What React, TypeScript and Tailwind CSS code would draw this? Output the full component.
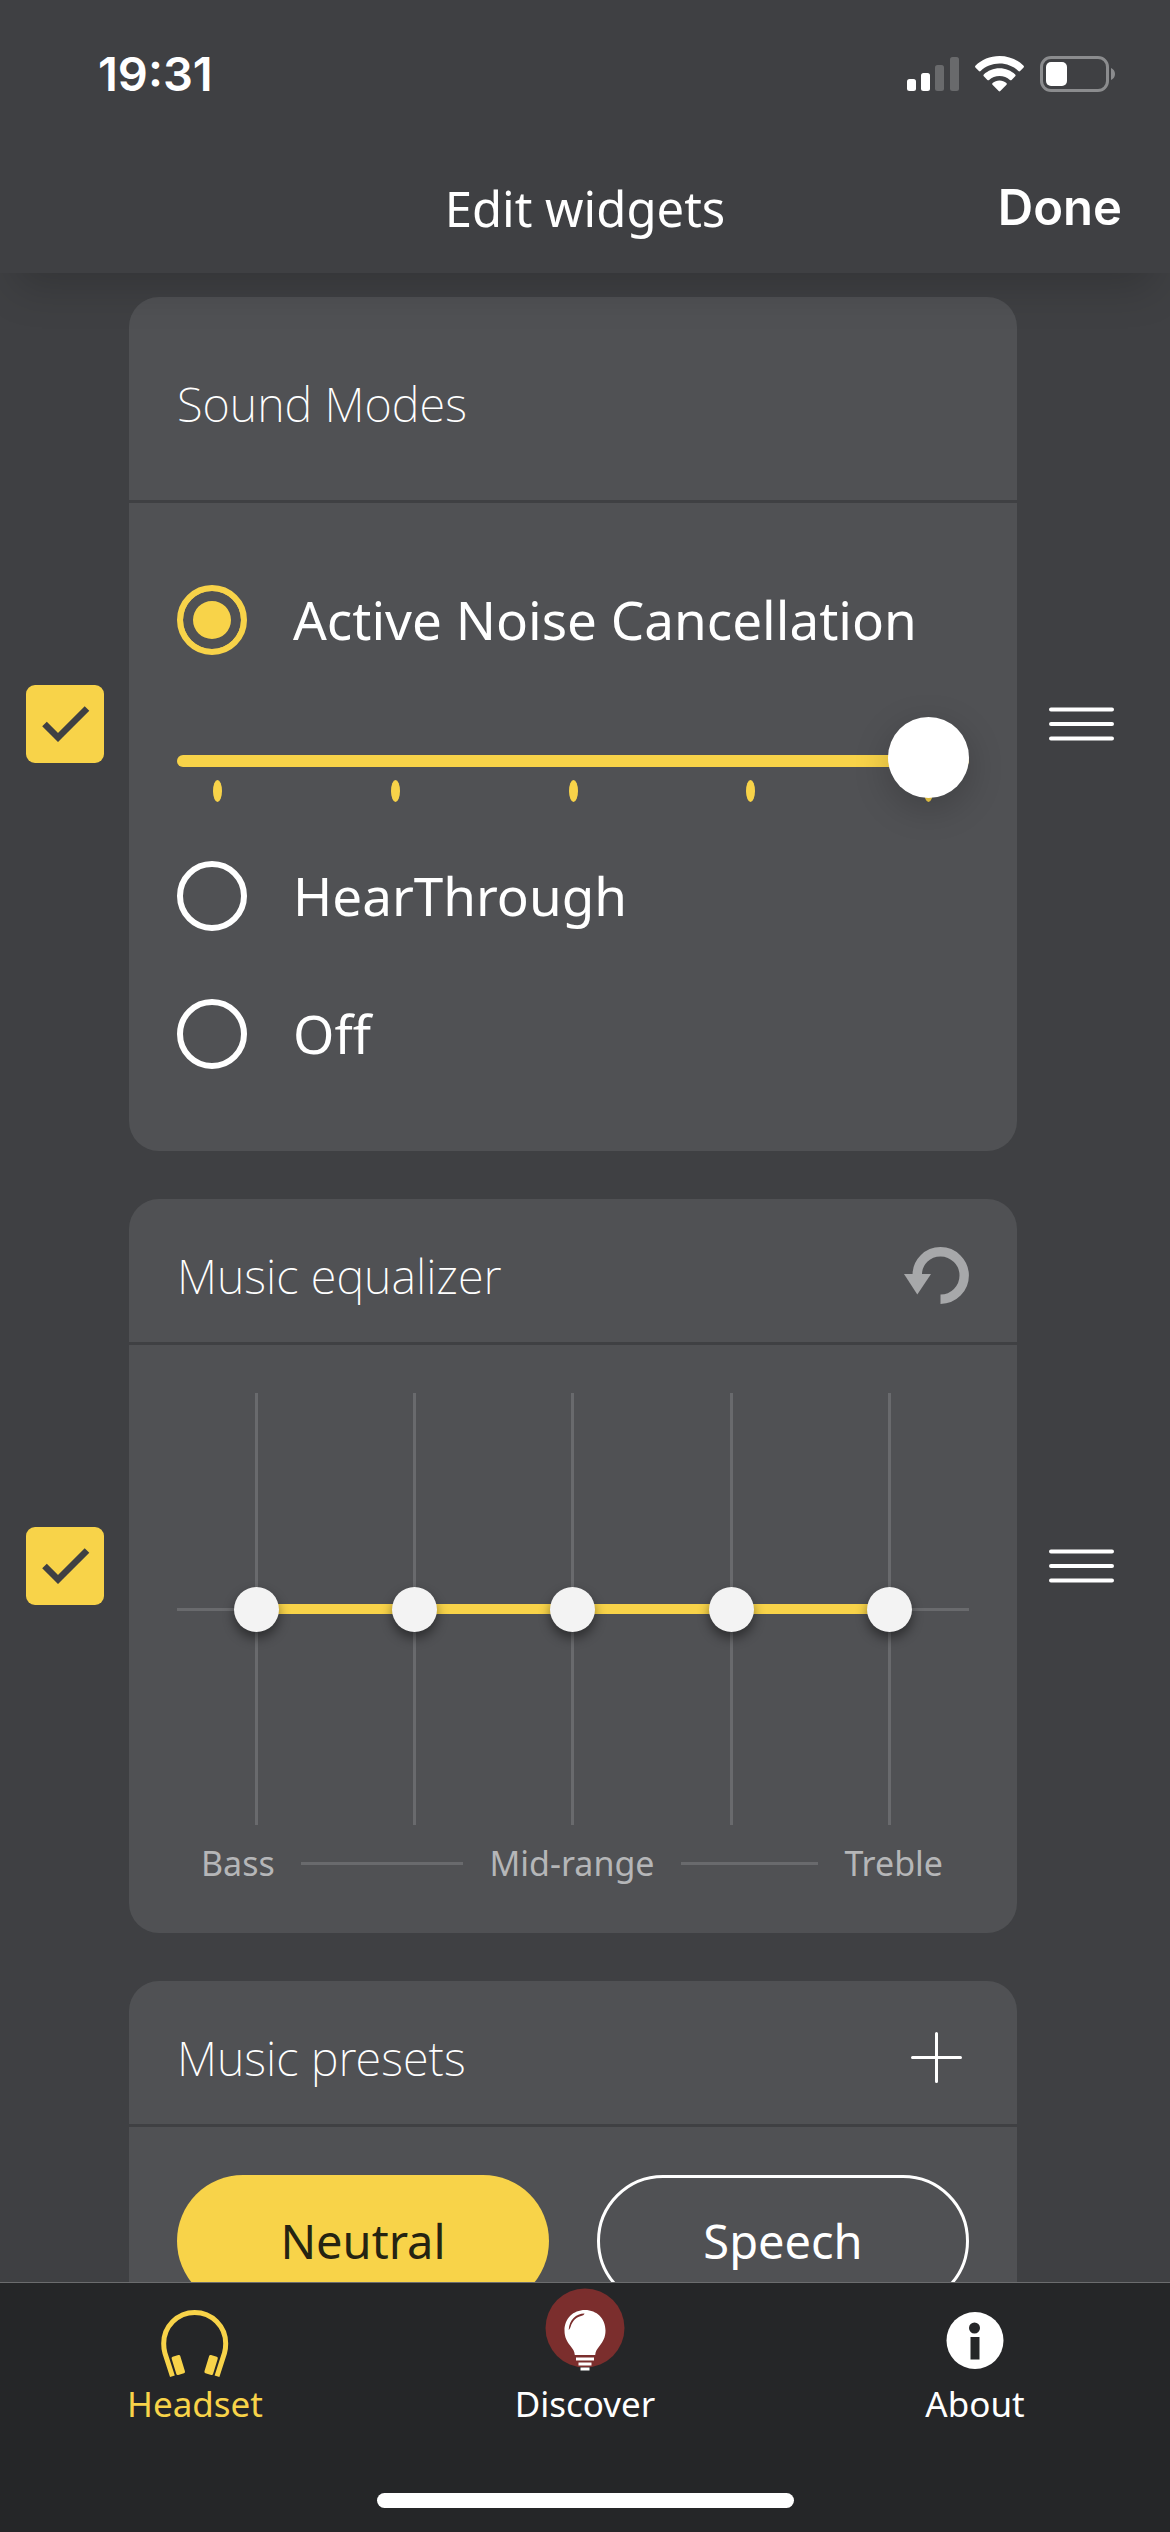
import React from "react";

const soundModes = ["HearThrough", "Off"];
const bands = ["Bass", "Low mid", "Mid-range", "High mid", "Treble"];

function StatusBar() {
  return (
    <div className="h-[143px] pt-[46px] pl-[98px] pr-[55px]">
      <div className="h-[56px] flex items-center justify-between">
        <span className="font-['Inter',sans-serif] font-semibold text-[47px] leading-[56px]">
          19:31
        </span>
        <div className="flex items-center gap-[16px]">
          <svg width="52" height="36" viewBox="0 0 52 36" fill="#fff">
            <rect x="0" y="23" width="9" height="12" rx="2.5" />
            <rect x="14" y="17" width="9" height="18" rx="2.5" />
            <rect x="28" y="9" width="9" height="26" rx="2.5" opacity="0.22" />
            <rect x="43" y="1" width="9" height="34" rx="2.5" opacity="0.22" />
          </svg>
          <svg width="49" height="36" viewBox="0 0 49 36" fill="#fff">
            <path d="M24.5 0C34 0 42.500 3.700 48.600 9.700c.5.5.5 1.200 0 1.700l-3.500 3.600c-.5.5-1.200.5-1.700 0C38.500 10.300 31.800 7.500 24.500 7.500S10.500 10.300 5.600 15c-.5.500-1.200.500-1.700 0L.4 11.400c-.5-.5-.5-1.200 0-1.700C6.500 3.700 15 0 24.500 0z" />
            <path d="M24.500 12.300c6.100 0 11.600 2.400 15.700 6.200.5.5.5 1.300 0 1.800l-3.600 3.600c-.5.5-1.200.5-1.700 0-2.700-2.500-6.400-4-10.400-4s-7.700 1.500-10.400 4c-.5.5-1.200.5-1.700 0l-3.600-3.600c-.5-.5-.5-1.300 0-1.800 4.100-3.800 9.600-6.200 15.700-6.200z" />
            <path d="M24.500 24.500c2.600 0 5 .9 6.900 2.500.5.5.6 1.200.1 1.700l-6.200 6.400c-.5.500-1.200.500-1.600 0l-6.200-6.400c-.5-.5-.4-1.200.1-1.700 1.900-1.600 4.300-2.500 6.900-2.500z" />
          </svg>
          <svg width="75" height="36" viewBox="0 0 75 36" fill="none">
            <rect x="1.500" y="1.500" width="66" height="33" rx="9.500" stroke="#8b8c8e" strokeWidth="3" />
            <rect x="6" y="6" width="21" height="24" rx="5" fill="#fff" />
            <path d="M71 12c2.400 1 4 3.300 4 6s-1.600 5-4 6z" fill="#8b8c8e" />
          </svg>
        </div>
      </div>
    </div>
  );
}

function Header() {
  return (
    <header className="relative z-10 shrink-0 bg-[#3f4043] shadow-[0_30px_40px_-16px_rgba(0,0,0,0.18)]">
      <StatusBar />
      <div className="h-[130px] grid grid-cols-[1fr_auto_1fr] items-center px-[48px]">
        <h1 className="col-start-2 text-[49px] leading-[64px]">Edit widgets</h1>
        <button className="justify-self-end font-['Inter',sans-serif] font-semibold text-[49px] leading-[64px]">
          Done
        </button>
      </div>
    </header>
  );
}

type WidgetProps = {
  title: string;
  tall?: boolean;
  action?: React.ReactNode;
  className?: string;
  children: React.ReactNode;
};

function Widget({ title, tall, action, className = "", children }: WidgetProps) {
  return (
    <div className="flex items-center shrink-0">
      <label className="grid pl-[26px] pr-[25px]">
        <input
          type="checkbox"
          defaultChecked
          aria-label={title}
          className="[grid-area:1/1] appearance-none w-[78px] h-[78px] rounded-[9px] bg-[#f8d349]"
        />
        <svg
          className="[grid-area:1/1] pointer-events-none"
          width="78"
          height="78"
          viewBox="0 0 78 78"
          fill="none"
        >
          <path d="M18.500 39l13.500 13.500L61 23.500" stroke="#3f4043" strokeWidth="6.500" />
        </svg>
      </label>
      <section className={`flex-1 rounded-[30px] bg-[#505154] ${className}`}>
        <div
          className={`flex items-center justify-between px-[48px] pt-[10px] border-b-[3px] border-[#3f4043] ${
            tall ? "h-[206px]" : "h-[146px]"
          }`}
        >
          <h2 className="text-[47px] leading-[60px] font-extralight">{title}</h2>
          {action}
        </div>
        {children}
      </section>
      <button aria-label={`Move ${title}`} className="pl-[32px] pr-[56px]">
        <svg width="65" height="34" viewBox="0 0 65 34" stroke="#fff" strokeWidth="4" strokeLinecap="round">
          <path d="M2 2.500h61M2 17h61M2 31.500h61" />
        </svg>
      </button>
    </div>
  );
}

function ModeOption({ name, checked }: { name: string; checked?: boolean }) {
  return (
    <label className="flex items-center gap-[46px] h-[70px]">
      <input
        type="radio"
        name="sound-mode"
        defaultChecked={checked}
        className="appearance-none w-[70px] h-[70px] rounded-full border-[6px] border-white checked:border-[#f8d349] checked:bg-[#f8d349] checked:shadow-[inset_0_0_0_10px_#505154]"
      />
      <span className="text-[53px] leading-[70px]">{name}</span>
    </label>
  );
}

function SoundModes() {
  return (
    <div className="px-[48px] py-[82px]">
      <ModeOption name="Active Noise Cancellation" checked />
      <div className="grid mt-[62px] mb-[56px]">
        <div className="[grid-area:1/1] flex justify-between px-[36px] pt-[63px]">
          {[0, 1, 2, 3, 4].map((tick) => (
            <span key={tick} className="w-[9px] h-[22px] rounded-[50%] bg-[#f8d349]" />
          ))}
        </div>
        <input
          type="range"
          min={0}
          max={4}
          defaultValue={4}
          aria-label="Noise cancellation level"
          className="[grid-area:1/1] appearance-none w-full h-[88px] bg-transparent [&::-webkit-slider-runnable-track]:h-[12px] [&::-webkit-slider-runnable-track]:rounded-full [&::-webkit-slider-runnable-track]:bg-[#f8d349] [&::-webkit-slider-thumb]:appearance-none [&::-webkit-slider-thumb]:w-[81px] [&::-webkit-slider-thumb]:h-[81px] [&::-webkit-slider-thumb]:mt-[-38px] [&::-webkit-slider-thumb]:rounded-full [&::-webkit-slider-thumb]:bg-white [&::-webkit-slider-thumb]:shadow-[0_10px_36px_rgba(0,0,0,0.2)]"
        />
      </div>
      <div className="flex flex-col gap-[68px]">
        {soundModes.map((mode) => (
          <ModeOption key={mode} name={mode} />
        ))}
      </div>
    </div>
  );
}

function Equalizer() {
  return (
    <div className="px-[48px] pt-[48px] pb-[50px]">
      <div className="grid items-center h-[432px]">
        <div className="[grid-area:1/1] h-[3px] bg-[#696a6d]" />
        <div className="[grid-area:1/1] z-10 h-[10px] mx-[10%] bg-[#f8d349]" />
        <div className="[grid-area:1/1] z-20 grid grid-cols-5 justify-items-center">
          {bands.map((band) => (
            <input
              key={band}
              type="range"
              min={-6}
              max={6}
              defaultValue={0}
              aria-label={band}
              className="appearance-none [writing-mode:vertical-lr] w-[45px] h-[432px] bg-transparent [&::-webkit-slider-runnable-track]:w-[3px] [&::-webkit-slider-runnable-track]:bg-[#696a6d] [&::-webkit-slider-thumb]:appearance-none [&::-webkit-slider-thumb]:w-[45px] [&::-webkit-slider-thumb]:h-[45px] [&::-webkit-slider-thumb]:ml-[-21px] [&::-webkit-slider-thumb]:rounded-full [&::-webkit-slider-thumb]:bg-[#f3f3f3] [&::-webkit-slider-thumb]:shadow-[0_6px_12px_rgba(0,0,0,0.45)]"
            />
          ))}
        </div>
      </div>
      <div className="mt-[18px] grid grid-cols-[1fr_auto_1fr] gap-[26px] pl-[24px] pr-[26px] text-[34px] leading-[40px] text-[#b5b6b8]">
        <div className="flex items-center gap-[26px]">
          <span>Bass</span>
          <span className="flex-1 h-[3px] bg-[#696a6d]" />
        </div>
        <span>Mid-range</span>
        <div className="flex items-center gap-[26px]">
          <span className="flex-1 h-[3px] bg-[#696a6d]" />
          <span>Treble</span>
        </div>
      </div>
    </div>
  );
}

function Presets() {
  return (
    <div className="grid grid-cols-2 gap-[48px] px-[48px] pt-[48px]">
      <button className="h-[132px] rounded-full bg-[#f8d349] text-[#252412] text-[47px] leading-[60px]">
        Neutral
      </button>
      <button className="h-[132px] rounded-full border-[3px] border-white text-[47px] leading-[60px]">
        Speech
      </button>
    </div>
  );
}

function ResetButton() {
  return (
    <button aria-label="Reset equalizer">
      <svg width="65" height="57" viewBox="0 0 65 57" fill="none">
        <path
          d="M13.200 28C13.200 15 23.600 4.800 36.500 4.800S60.200 15.400 60.200 28.500 49.600 52.200 36.500 52.200"
          stroke="#a7a8aa"
          strokeWidth="9.400"
        />
        <path d="M0 27h27L13.300 47.500z" fill="#a7a8aa" />
      </svg>
    </button>
  );
}

function AddButton() {
  return (
    <button aria-label="Add preset" className="pr-[7px]">
      <svg width="51" height="51" viewBox="0 0 51 51" stroke="#fff" strokeWidth="3" strokeLinecap="round">
        <path d="M25.500 1.500v48M1.500 25.500h48" />
      </svg>
    </button>
  );
}

function TabBar() {
  return (
    <nav className="relative z-10 shrink-0 h-[250px] bg-[#252628] border-t border-[#6b6c6e] flex flex-col justify-between pb-6">
      <div className="grid grid-cols-3 text-[35px] leading-[40px]">
        <a href="#headset" className="flex flex-col items-center pt-[5px] text-[#f8d349]">
          <svg width="80" height="96" viewBox="0 0 80 96" fill="none">
            <path
              d="M17.400 88.200L9.900 65C9 62 8.700 59 8.700 55.500a31 31 0 0 1 62 0c0 3.500-.3 6.500-1.200 9.500L62 88.200"
              stroke="#f8d349"
              strokeWidth="5"
            />
            <rect x="-4.500" y="-9.500" width="9" height="19" rx="1.500" transform="translate(23.300 77) rotate(-17)" fill="#f8d349" />
            <rect x="-4.500" y="-9.500" width="9" height="19" rx="1.500" transform="translate(56.100 77) rotate(17)" fill="#f8d349" />
          </svg>
          <span>Headset</span>
        </a>
        <a href="#discover" className="flex flex-col items-center pt-[5px]">
          <svg width="80" height="96" viewBox="0 0 80 96">
            <circle cx="40" cy="40" r="39.500" fill="#7b2e2d" />
            <path
              d="M40 22c11.800 0 20.500 8.700 20.500 20.500 0 7-2.700 11.400-5.800 15.300-2.800 3.500-4.200 5.400-4.500 9.200H29.800c-.3-3.800-1.700-5.700-4.500-9.200-3.100-3.900-5.800-8.300-5.800-15.300C19.500 30.700 28.200 22 40 22z"
              fill="#fff"
            />
            <path
              d="M39.500 25.500c-8.500.3-15.200 6-15.800 16.500 1-1 1.500-2 2-3.500 2-6 5.500-9.500 11.800-11 1-.3 1.700-1 2-2z"
              fill="#7b2e2d"
            />
            <path d="M31 69.500h18v3H31zM33.500 74.500h13v3h-13zM35.500 79.500h9v3h-9z" fill="#fff" />
          </svg>
          <span>Discover</span>
        </a>
        <a href="#about" className="flex flex-col items-center pt-[5px]">
          <svg width="80" height="96" viewBox="0 0 80 96">
            <circle cx="40" cy="52.500" r="28.500" fill="#fff" />
            <circle cx="39.500" cy="40" r="5.500" fill="#252628" />
            <rect x="35.500" y="49" width="9" height="22.500" fill="#252628" />
          </svg>
          <span>About</span>
        </a>
      </div>
      <div className="self-center w-[417px] h-[15px] rounded-full bg-white" />
    </nav>
  );
}

export default function App() {
  return (
    <div className="h-screen flex flex-col overflow-hidden bg-[#3f4043] text-white font-['Noto_Sans',sans-serif]">
      <Header />
      <main className="flex-1 min-h-0 overflow-hidden flex flex-col gap-[48px] pt-6">
        <Widget title="Sound Modes" tall>
          <SoundModes />
        </Widget>
        <Widget title="Music equalizer" action={<ResetButton />}>
          <Equalizer />
        </Widget>
        <Widget title="Music presets" action={<AddButton />} className="min-h-[734px]">
          <Presets />
        </Widget>
      </main>
      <TabBar />
    </div>
  );
}
